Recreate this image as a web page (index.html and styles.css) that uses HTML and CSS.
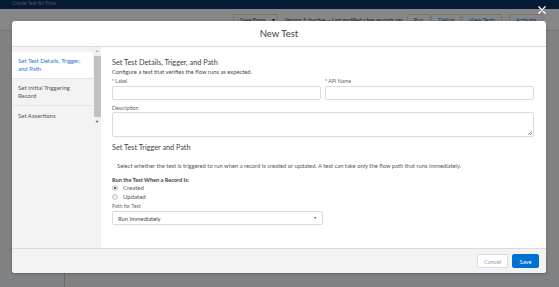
FILE: index.html
```html
<!DOCTYPE html>
<html lang="en">
<head>
<meta charset="utf-8">
<title>New Test</title>
<link rel="stylesheet" href="styles.css">
</head>
<body>
<div class="page">
  <div class="topbar"><span class="topbar-title">Create Test for Flow</span></div>
  <div class="toolbar">
    <span class="tb-btn tb-save">Save Form <span class="caret">▾</span></span>
    <span class="tb-text">Version 3: Inactive — Last modified a few seconds ago</span>
    <span class="tb-group">
      <span class="tb-btn">Run</span>
      <span class="tb-btn">Debug</span>
      <span class="tb-btn">View Tests</span>
    </span>
    <span class="tb-btn tb-activate">Activate</span>
  </div>
  <div class="canvas">
    <div class="canvas-col"></div>
  </div>
</div>

<div class="backdrop"></div>

<section class="modal">
  <button class="close" aria-label="Close">
    <svg viewBox="0 0 10 10" width="8" height="8"><path d="M1 1 L9 9 M9 1 L1 9" stroke="#fff" stroke-width="1.6" stroke-linecap="round"/></svg>
  </button>
  <header class="modal-header">New Test</header>
  <div class="modal-body">
    <aside class="sidebar">
      <div class="side-scroll">
        <nav class="nav">
          <div class="nav-item active">Set Test Details, Trigger, and Path</div>
          <div class="nav-item">Set Initial Triggering Record</div>
          <div class="nav-item">Set Assertions</div>
        </nav>
        <div class="scrollbar">
          <span class="sb-arrow up">▲</span>
          <span class="sb-thumb"></span>
          <span class="sb-arrow down">▼</span>
        </div>
      </div>
    </aside>
    <main class="content">
      <h2 class="section-title">Set Test Details, Trigger, and Path</h2>
      <p class="subtitle">Configure a test that verifies the flow runs as expected.</p>
      <div class="field-row">
        <div class="field">
          <label class="label"><abbr class="req">*</abbr>Label</label>
          <input class="input" type="text">
        </div>
        <div class="field">
          <label class="label"><abbr class="req">*</abbr>API Name</label>
          <input class="input" type="text">
        </div>
      </div>
      <div class="field desc">
        <label class="label">Description</label>
        <div class="textarea"><span class="grip"></span></div>
      </div>
      <h2 class="section-title second">Set Test Trigger and Path</h2>
      <p class="help">Select whether the test is triggered to run when a record is created or updated. A test can take only the flow path that runs immediately.</p>
      <p class="bold-label">Run the Test When a Record Is:</p>
      <div class="radio-row"><span class="radio checked"></span>Created</div>
      <div class="radio-row"><span class="radio"></span>Updated</div>
      <label class="label path-label">Path for Test</label>
      <div class="select"><span>Run Immediately</span><span class="sel-caret">▼</span></div>
    </main>
  </div>
  <footer class="modal-footer">
    <button class="btn btn-neutral">Cancel</button>
    <button class="btn btn-brand">Save</button>
  </footer>
</section>
</body>
</html>
```
FILE: styles.css
```css
* { box-sizing: border-box; }
html, body { margin: 0; padding: 0; }
body {
  width: 559px;
  height: 287px;
  overflow: hidden;
  position: relative;
  font-family: Lato, "Open Sans", sans-serif;
  color: #4a4a4a;
  background: #fff;
}

/* background page */
.page { display: flex; flex-direction: column; height: 287px; }
.topbar {
  height: 9px;
  background: #0c3163;
  color: #8f9fb8;
  font-size: 5px;
  line-height: 7px;
  padding-left: 12px;
  overflow: hidden;
}
.toolbar {
  height: 22px;
  display: flex;
  align-items: flex-start;
  padding: 5px 0 0 233px;
  border-bottom: 1px solid #d8dde6;
  font-size: 5.5px;
  color: #0070d2;
}
.tb-btn {
  border: 1px solid #dddbda;
  border-radius: 2px;
  height: 14px;
  padding: 2px 6px;
  background: #fff;
  white-space: nowrap;
}
.tb-save { width: 45px; color: #3e3e3c; }
.caret { margin-left: 5px; }
.tb-text { color: #3e3e3c; margin: 3px 4px 0 7px; white-space: nowrap; font-size: 5px; }
.tb-group { display: flex; }
.tb-group .tb-btn { margin-right: 1px; }
.tb-activate { margin-left: 6px; }
.canvas { flex: 1; background: #f4f6f9; display: flex; }
.canvas-col { width: 65px; border-right: 1px solid #c9c9c9; }

.backdrop {
  position: absolute;
  inset: 0;
  background: rgba(0, 0, 0, 0.47);
}

/* modal */
.modal {
  position: absolute;
  left: 12px;
  top: 21px;
  width: 534px;
  height: 252px;
  background: #fff;
  border-radius: 3px;
  display: flex;
  flex-direction: column;
  box-shadow: 0 1px 3px rgba(0,0,0,0.25);
}
.close {
  position: absolute;
  right: 0;
  top: -15px;
  border: 0;
  background: none;
  padding: 0;
  width: 8px;
  height: 8px;
  display: flex;
}
.modal-header {
  height: 26px;
  border-bottom: 1px solid #dddbda;
  display: flex;
  align-items: center;
  justify-content: center;
  font-size: 9.5px;
  color: #3e3e3c;
  border-radius: 3px 3px 0 0;
}
.modal-body { flex: 1; display: flex; min-height: 0; }

.sidebar { width: 89px; background: #f3f3f3; }
.side-scroll { display: flex; height: 79px; }
.nav { width: 81px; padding-top: 5px; }
.nav-item {
  height: 27px;
  display: flex;
  align-items: center;
  padding: 0 6px;
  font-size: 6px;
  line-height: 8px;
  color: #555;
  border-bottom: 1px solid #e5e5e5;
}
.nav-item.active { background: #fff; color: #2a74d3; }
.nav-item:last-child { border-bottom: 0; height: 19px; }
.scrollbar {
  width: 8px;
  background: #f1f1f1;
  display: flex;
  flex-direction: column;
  align-items: center;
}
.sb-arrow { font-size: 4px; line-height: 8px; height: 8px; color: #a3a3a3; }
.sb-arrow.down { color: #505050; }
.sb-thumb { flex: 1; width: 7px; background: #c1c1c1; margin: 1px 0; }

.content { flex: 1; padding: 11px 12px 0 11px; }
.section-title {
  margin: 0;
  font-size: 7.3px;
  line-height: 9px;
  font-weight: 400;
  color: #444;
}
.subtitle { margin: 1px 0 0; font-size: 5.8px; line-height: 7px; color: #4a4a4a; }
.field-row { display: flex; gap: 4px; margin-top: 3px; }
.field { flex: 1; display: flex; flex-direction: column; }
.label {
  font-size: 5.2px;
  line-height: 6px;
  margin-bottom: 2px;
  color: #666;
}
.req { color: #c23934; text-decoration: none; margin-right: 1px; }
.input {
  height: 14px;
  border: 1px solid #dddbda;
  border-radius: 2px;
  background: #fff;
  padding: 0;
  margin: 0;
}
.desc { margin-top: 5px; }
.desc .label { margin-bottom: 1px; }
.textarea {
  height: 25px;
  border: 1px solid #dddbda;
  border-radius: 2px;
  position: relative;
}
.grip {
  position: absolute;
  right: 1px;
  bottom: 1px;
  width: 4px;
  height: 4px;
  background: linear-gradient(135deg, transparent 45%, #999 45%, #999 55%, transparent 55%, transparent 70%, #999 70%, #999 80%, transparent 80%);
}
.section-title.second { margin-top: 6px; }
.help { margin: 10px 0 0 5px; font-size: 5.8px; line-height: 7px; color: #555; }
.bold-label { margin: 7px 0 0; font-size: 5.6px; line-height: 7px; font-weight: 700; color: #3e3e3c; }
.radio-row {
  display: flex;
  align-items: center;
  height: 9px;
  font-size: 6px;
  color: #555;
}
.radio-row:first-of-type { margin-top: 2px; }
.radio {
  width: 6px;
  height: 6px;
  border-radius: 50%;
  border: 1px solid #c9c9c9;
  background: #ececec;
  margin: 0 5px 0 0;
  display: flex;
  align-items: center;
  justify-content: center;
}
.radio.checked::after {
  content: "";
  width: 2px;
  height: 2px;
  border-radius: 50%;
  background: #3e3e3c;
}
.path-label { display: block; margin-top: 2px; }
.select {
  width: 211px;
  height: 14px;
  border: 1px solid #dddbda;
  border-radius: 2px;
  display: flex;
  align-items: center;
  justify-content: space-between;
  padding: 0 5px 0 5px;
  font-size: 5.8px;
  color: #4a4a4a;
}
.sel-caret { font-size: 3.5px; color: #555; }

.modal-footer {
  height: 25px;
  background: #f3f3f3;
  border-top: 1px solid #dddbda;
  display: flex;
  align-items: center;
  justify-content: flex-end;
  gap: 4px;
  padding-right: 7px;
  border-radius: 0 0 3px 3px;
}
.btn {
  height: 14px;
  border-radius: 2px;
  font-family: inherit;
  font-size: 5.8px;
  padding: 0;
  margin: 0;
}
.btn-neutral { width: 31px; background: #fff; border: 1px solid #dddbda; color: #8aa3cc; }
.btn-brand { width: 27px; background: #0070d2; border: 1px solid #0070d2; color: #fff; }
```
